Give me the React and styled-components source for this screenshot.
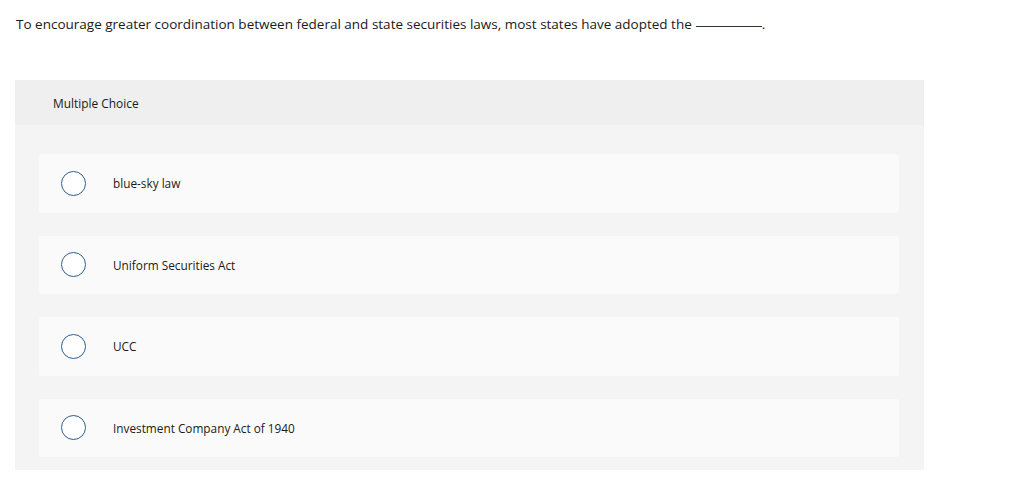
import React from 'react';
import styled, { createGlobalStyle } from 'styled-components';

const GlobalStyle = createGlobalStyle`
  body {
    margin: 0;
    background: #ffffff;
    font-family: "Open Sans", "Liberation Sans", sans-serif;
    color: #1a1a1a;
  }
`;

const Page = styled.div`
  padding: 15px 100px 16px 15px;
`;

const Question = styled.p`
  margin: 0 0 0 1px;
  font-size: 13.5px;
  line-height: 18px;
  color: #1a1a1a;
`;

const Blank = styled.span`
  display: inline-block;
  width: 66px;
  border-bottom: 1px solid #333;
  margin-left: 4px;
  vertical-align: 2px;
`;

const Panel = styled.section`
  margin-top: 47px;
  width: 909px;
  background: #f4f4f4;
`;

const PanelHeader = styled.div`
  height: 45px;
  background: #efefef;
  display: flex;
  align-items: center;
  padding-left: 38px;
  font-size: 11.9px;
  color: #1a1a1a;
`;

const OptionList = styled.div`
  display: flex;
  flex-direction: column;
  gap: 23px;
  padding: 29px 25px 13px 24px;
`;

const Option = styled.label`
  display: flex;
  align-items: center;
  height: 58.5px;
  background: #fafafa;
  border-radius: 3px;
  padding-left: 22px;
  cursor: pointer;
`;

const Radio = styled.span`
  width: 23px;
  height: 23px;
  border: 1px solid #2d5f8f;
  border-radius: 50%;
  background: #fff;
  flex-shrink: 0;
`;

const OptionText = styled.span`
  margin-left: 27px;
  font-size: 11.8px;
  color: #1a1a1a;
`;

const options = [
  'blue-sky law',
  'Uniform Securities Act',
  'UCC',
  'Investment Company Act of 1940',
];

export default function App() {
  return (
    <>
      <GlobalStyle />
      <Page>
        <Question>
          To encourage greater coordination between federal and state securities laws, most states have adopted the
          <Blank />.
        </Question>
        <Panel>
          <PanelHeader>Multiple Choice</PanelHeader>
          <OptionList>
            {options.map(o => (
              <Option key={o}>
                <Radio />
                <OptionText>{o}</OptionText>
              </Option>
            ))}
          </OptionList>
        </Panel>
      </Page>
    </>
  );
}
